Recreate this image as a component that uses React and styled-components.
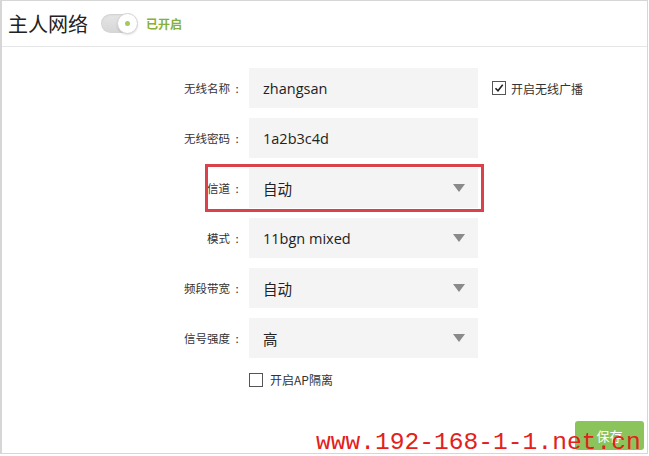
import styled, { createGlobalStyle } from "styled-components";

const GlobalStyle = createGlobalStyle`
  html, body {
    margin: 0;
    padding: 0;
    background: #fff;
  }
  body {
    font-family: "Open Sans", "Noto Sans CJK SC", sans-serif;
    color: #333;
  }
`;

const Frame = styled.div`
  position: relative;
  width: 648px;
  height: 454px;
  box-sizing: border-box;
  border: 1px solid #d6d6d6;
  border-left-width: 2px;
`;

const Header = styled.div`
  display: flex;
  align-items: center;
  height: 45px;
  padding-left: 6px;
  border-bottom: 1px solid #e6e6e6;

  h1 {
    margin: 0 13px 0 0;
    font-family: "Noto Sans CJK SC", sans-serif;
    font-size: 20px;
    font-weight: 400;
    color: #222;
  }
`;

const Toggle = styled.div`
  position: relative;
  width: 36px;
  height: 19px;
  border-radius: 10px;
  background: linear-gradient(#e6e6e6, #d6d6d6);
  box-shadow: inset 0 1px 2px rgba(0, 0, 0, 0.1);

  span {
    position: absolute;
    right: -1px;
    top: -1px;
    width: 19px;
    height: 19px;
    border-radius: 50%;
    background: #fff;
    border: 1px solid #d4d4d4;
    box-shadow: 0 1px 2px rgba(0, 0, 0, 0.12);
  }

  span::after {
    content: "";
    position: absolute;
    left: 7px;
    top: 7px;
    width: 5px;
    height: 5px;
    border-radius: 50%;
    background: #a7c95a;
  }
`;

const Status = styled.span`
  margin-left: 9px;
  font-family: "Noto Sans CJK SC", sans-serif;
  font-size: 12px;
  font-weight: 700;
  color: #86b03a;
`;

const Form = styled.div`
  display: flex;
  flex-direction: column;
  gap: 10px;
  padding: 21px 0 0 148px;
`;

const Row = styled.div`
  position: relative;
  display: flex;
  align-items: center;
  gap: 5px;
  margin-top: ${(p) => p.$top || 0}px;

  ${(p) =>
    p.$marked &&
    `
    &::after {
      content: "";
      position: absolute;
      left: 55px;
      top: -4px;
      width: 279px;
      height: 48px;
      box-sizing: border-box;
      border: 3px solid #d9424b;
      pointer-events: none;
    }
  `}
`;

const Label = styled.label`
  display: flex;
  justify-content: flex-end;
  width: 94px;
  font-family: "Noto Sans CJK SC", sans-serif;
  font-size: 11.5px;
  color: #333;
`;

const Colon = styled.span`
  width: 14px;
  text-align: center;
`;

const Field = styled.div`
  display: flex;
  align-items: center;
  justify-content: space-between;
  width: 229px;
  height: 40px;
  box-sizing: border-box;
  padding: 0 13px 0 14px;
  background: #f4f4f4;
  font-size: 14.5px;
  color: #222;
`;

const Arrow = styled.span`
  width: 0;
  height: 0;
  border-left: 6px solid transparent;
  border-right: 6px solid transparent;
  border-top: 8px solid #8a8a8a;
`;

const Check = styled.label`
  display: flex;
  align-items: center;
  gap: 5px;
  margin-left: ${(p) => p.$offset || 0}px;
  font-family: "Noto Sans CJK SC", sans-serif;
  font-size: 12px;
  color: #333;
`;

const Box = styled.span`
  display: flex;
  align-items: center;
  justify-content: center;
  width: 12px;
  height: 12px;
  border: 1px solid #555;
  background: #fff;
  margin-right: ${(p) => p.$gap || 0}px;
`;

const Footer = styled.div`
  display: flex;
  justify-content: flex-end;
  padding: 33px 3px 0 0;
`;

const SaveButton = styled.button`
  width: 69px;
  height: 29px;
  border: none;
  border-radius: 3px;
  background: #8cc45c;
  color: #fff;
  font-family: "Noto Sans CJK SC", sans-serif;
  font-size: 13px;
`;

const Watermark = styled.div`
  position: absolute;
  left: 314px;
  bottom: -3px;
  font-family: "Liberation Mono", monospace;
  font-size: 24.6px;
  color: #e3201c;
  white-space: nowrap;
  pointer-events: none;
`;

const CheckMark = () => (
  <svg width="10" height="10" viewBox="0 0 10 10">
    <path d="M1.5 5.2 L4 7.8 L8.7 1.8" fill="none" stroke="#222" strokeWidth="1.6" />
  </svg>
);

const FieldLabel = ({ children }) => (
  <Label>
    {children}
    <Colon>:</Colon>
  </Label>
);

const selects = [
  { label: "信道", value: "自动", marked: true },
  { label: "模式", value: "11bgn mixed" },
  { label: "频段带宽", value: "自动" },
  { label: "信号强度", value: "高" },
];

const App = () => {
  return (
    <>
      <GlobalStyle />
      <Frame>
        <Header>
          <h1>主人网络</h1>
          <Toggle>
            <span />
          </Toggle>
          <Status>已开启</Status>
        </Header>
        <Form>
          <Row>
            <FieldLabel>无线名称</FieldLabel>
            <Field>zhangsan</Field>
            <Check $offset={9}>
              <Box>
                <CheckMark />
              </Box>
              开启无线广播
            </Check>
          </Row>
          <Row>
            <FieldLabel>无线密码</FieldLabel>
            <Field>1a2b3c4d</Field>
          </Row>
          {selects.map((s) => (
            <Row key={s.label} $marked={s.marked}>
              <FieldLabel>{s.label}</FieldLabel>
              <Field>
                {s.value}
                <Arrow />
              </Field>
            </Row>
          ))}
          <Row $top={3}>
            <Label />
            <Check>
              <Box $gap={2} />
              开启AP隔离
            </Check>
          </Row>
        </Form>
        <Footer>
          <SaveButton>保存</SaveButton>
        </Footer>
        <Watermark>www.192-168-1-1.net.cn</Watermark>
      </Frame>
    </>
  );
};

export default App;
